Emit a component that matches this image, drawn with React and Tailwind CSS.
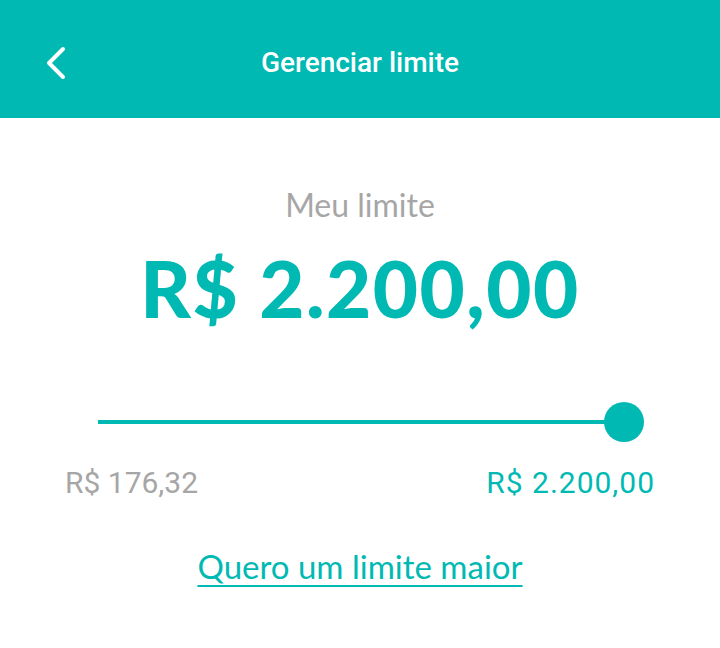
export default function App() {
  return (
    <div className="w-[720px] h-[648px] bg-white flex flex-col" style={{ fontFamily: 'Lato, sans-serif' }}>
      <header className="h-[118px] bg-[#00b9b3] flex items-center relative px-[44px] pt-[6px]">
        <svg width="24" height="34" viewBox="0 0 24 34" fill="none" className="mt-[2px]">
          <polyline points="19,3 5,17 19,31" stroke="white" strokeWidth="4" strokeLinecap="round" strokeLinejoin="round" />
        </svg>
        <h1 className="absolute inset-x-0 text-center text-white text-[28px] font-medium pointer-events-none pt-[2px]" style={{ fontFamily: 'Roboto, sans-serif' }}>
          Gerenciar limite
        </h1>
      </header>

      <main className="flex flex-col items-center">
        <p className="pt-[71px] text-[32px] leading-none text-[#a6a6a6]">Meu limite</p>
        <p className="mt-[28px] text-[78px] leading-none font-black text-[#00b9b3] tracking-[1.5px]">R$ 2.200,00</p>

        <div className="mt-[75px] w-full pl-[98px] pr-[76px] flex items-center">
          <div className="flex-1 h-[4px] bg-[#00b9b3]" />
          <div className="w-[40px] h-[40px] rounded-full bg-[#00b9b3] -ml-[6px]" />
        </div>

        <div className="mt-[26px] w-full px-[65px] flex justify-between text-[30px] leading-none" style={{ fontFamily: 'Roboto, sans-serif' }}>
          <span className="text-[#a6a6a6]">R$ 176,32</span>
          <span className="text-[#00b9b3] tracking-[1px]">R$ 2.200,00</span>
        </div>

        <a href="#" className="mt-[52px] text-[33px] leading-none text-[#00b9b3] underline underline-offset-[6px] decoration-2">
          Quero um limite maior
        </a>
      </main>
    </div>
  );
}
